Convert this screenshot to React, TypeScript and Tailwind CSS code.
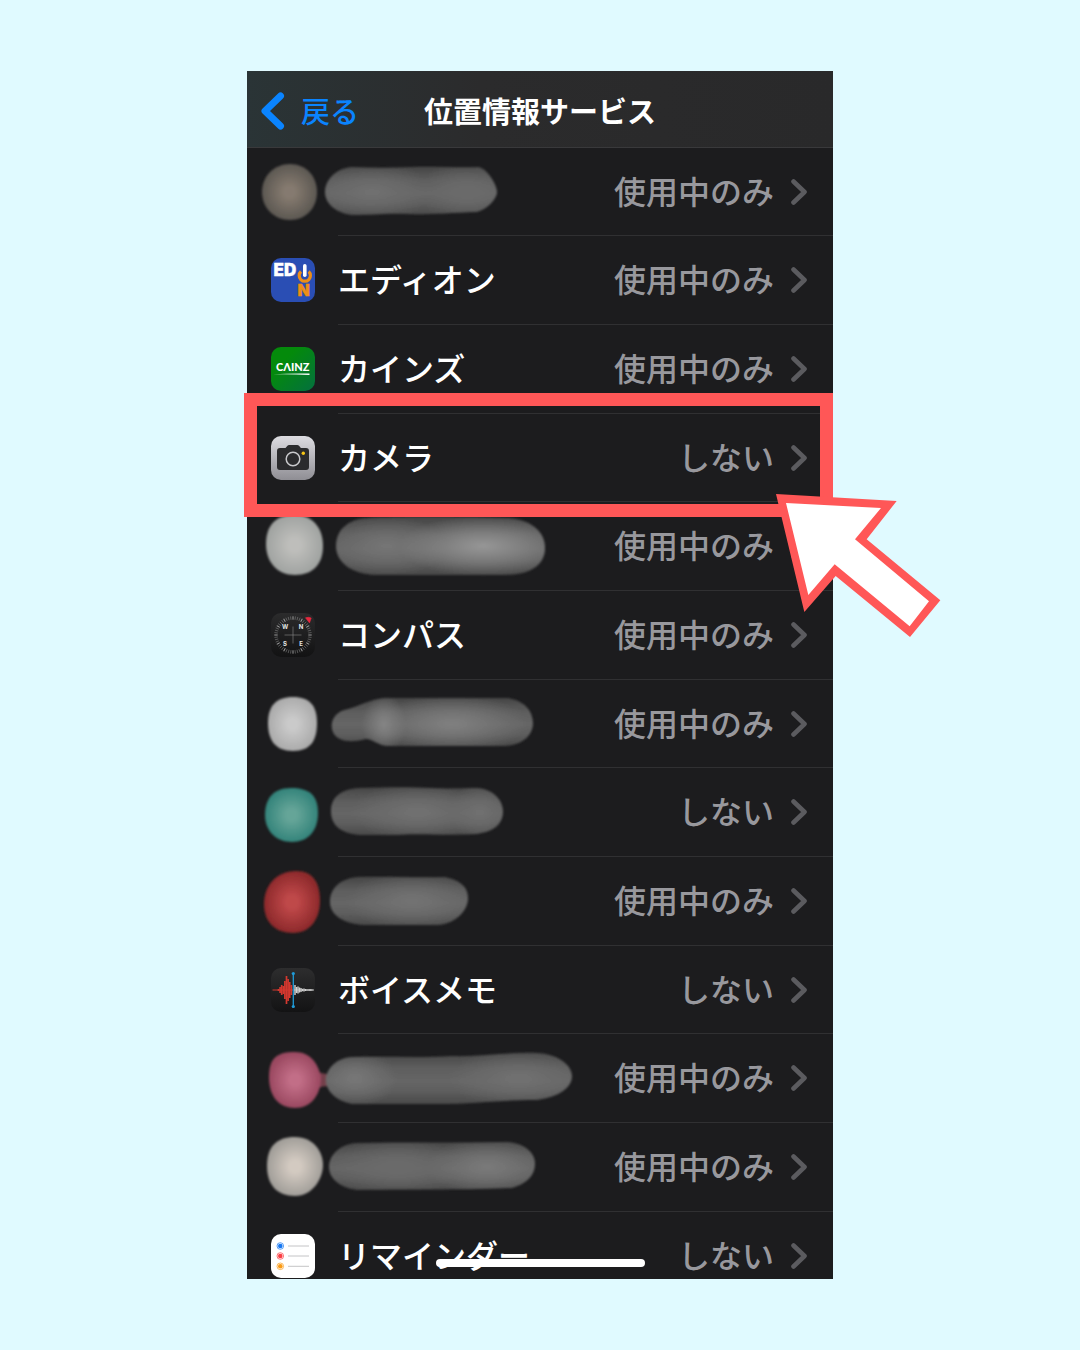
import React from "react";

type Smudge = {
  id: string;
  // round smudge over the app icon
  dot: string;
  dotColors: [string, string];
  // long smudge over the app name
  bar: string;
  // soft highlights inside the long smudge: x, radius, colour
  glows: [number, number, string][];
  bridge?: string;
};

type Row = {
  label?: string;
  icon?: React.ReactNode;
  smudge?: Smudge;
  value: string;
};

const WHILE_USING = "使用中のみ";
const NEVER = "しない";

function EdionIcon() {
  return (
    <svg viewBox="0 0 44 44" className="size-11 shrink-0" aria-hidden="true">
      <rect width="44" height="44" rx="10" fill="#2a4eb4" />
      <text
        x="2.500"
        y="18"
        fontFamily="Inter, sans-serif"
        fontSize="17"
        fontWeight="900"
        fill="#fff"
        stroke="#fff"
        strokeWidth="0.3"
      >
        ED
      </text>
      <path d="M30 13.500a5.600 5.600 0 1 0 7.600 0" fill="none" stroke="#ee8e17" strokeWidth="3.200" />
      <path d="M33.800 7.800v9" stroke="#2a4eb4" strokeWidth="5.600" />
      <path d="M33.800 7.800v9.400" stroke="#fff" strokeWidth="3.600" strokeLinecap="round" />
      <text
        x="26.500"
        y="38"
        fontFamily="Inter, sans-serif"
        fontSize="16"
        fontWeight="900"
        fill="#ee8e17"
        stroke="#ee8e17"
        strokeWidth="0.3"
      >
        N
      </text>
    </svg>
  );
}

function CainzIcon() {
  return (
    <svg viewBox="0 0 44 44" className="size-11 shrink-0" aria-hidden="true">
      <defs>
        <linearGradient id="cainz" x1="0" y1="0" x2="1" y2="1">
          <stop offset="0.3" stopColor="#048a0b" />
          <stop offset="1" stopColor="#04703f" />
        </linearGradient>
      </defs>
      <rect width="44" height="44" rx="10" fill="url(#cainz)" />
      <text x="5" y="24" fontFamily="Lato, sans-serif" fontSize="11" fontWeight="900" fill="#fff">
        CΛINZ
      </text>
      <path d="M2 27.300q18-1.200 36.500-.8v1.400Q20 26.900 2 27.300z" fill="#fff" />
    </svg>
  );
}

function CameraIcon() {
  return (
    <svg viewBox="0 0 44 44" className="size-11 shrink-0" aria-hidden="true">
      <defs>
        <linearGradient id="camera" x1="0" y1="0" x2="0" y2="1">
          <stop offset="0" stopColor="#dddce1" />
          <stop offset="1" stopColor="#8f8e94" />
        </linearGradient>
      </defs>
      <rect width="44" height="44" rx="10" fill="url(#camera)" />
      <path
        d="M9 12h5.500l1.700-2q.8-1 2-1h8q1.200 0 2 1l1.700 2H35q3 0 3 3v16q0 3-3 3H9q-3 0-3-3V15q0-3 3-3z"
        fill="#2b2b2d"
      />
      <circle cx="22" cy="23" r="6.800" fill="#2b2b2d" stroke="#c9c9cc" strokeWidth="1.500" />
      <circle cx="32.300" cy="17.200" r="1.700" fill="#f7c514" />
    </svg>
  );
}

function CompassIcon() {
  const ticks = Array.from({ length: 48 }, (_, i) => i * 7.5);
  return (
    <svg viewBox="0 0 44 44" className="size-11 shrink-0" aria-hidden="true">
      <defs>
        <linearGradient id="compass" x1="0" y1="0" x2="0" y2="1">
          <stop offset="0" stopColor="#2b2b2c" />
          <stop offset="1" stopColor="#121213" />
        </linearGradient>
      </defs>
      <rect width="44" height="44" rx="10" fill="url(#compass)" />
      {ticks.map((angle) => (
        <path
          key={angle}
          d="M22 3.300v3.400"
          stroke="#a8a8a8"
          strokeWidth={angle % 30 === 0 ? 0.9 : 0.4}
          transform={`rotate(${angle} 22 22)`}
        />
      ))}
      <path d="M22 13.500v17M13.500 22h17" stroke="#8c8c8c" strokeWidth="0.6" />
      <path d="M34.500 4.800q3-1 5.700.2l-1.700 4.900z" fill="#e8283f" stroke="#e8283f" strokeWidth="0.6" />
      <g fontFamily="Inter, sans-serif" fontSize="6" fontWeight="700" fill="#e6e6e6" textAnchor="middle">
        <text x="14" y="16">W</text>
        <text x="30" y="16">N</text>
        <text x="14" y="32.500">S</text>
        <text x="30" y="32.500">E</text>
      </g>
    </svg>
  );
}

function VoiceMemoIcon() {
  const red = [1, 3, 5, 4, 9, 14, 11, 8, 5];
  const white = [5, 3, 3.5, 2.5, 2, 1.2, 1.5, 1, 0.7, 0.6, 0.9, 0.6, 0.5];
  return (
    <svg viewBox="0 0 44 44" className="size-11 shrink-0" aria-hidden="true">
      <defs>
        <linearGradient id="memo" x1="0" y1="0" x2="0" y2="1">
          <stop offset="0" stopColor="#2d2d2e" />
          <stop offset="1" stopColor="#131314" />
        </linearGradient>
      </defs>
      <rect width="44" height="44" rx="10" fill="url(#memo)" />
      <path d="M1.500 22H22" stroke="#d3382f" strokeWidth="1" />
      <path d="M23 22h19.500" stroke="#c9c9c9" strokeWidth="0.8" />
      {red.map((h, i) => (
        <path key={i} d={`M${7.5 + i * 1.6} ${22 - h}v${h * 2}`} stroke="#d3382f" strokeWidth="1.700" />
      ))}
      {white.map((h, i) => (
        <path key={i} d={`M${24 + i * 1.5} ${22 - h}v${h * 2}`} stroke="#d2d2d2" strokeWidth="1.400" />
      ))}
      <path d="M22.300 5.500v33" stroke="#1f9bd8" strokeWidth="1.300" />
      <circle cx="22.300" cy="5.500" r="1.600" fill="#1f9bd8" />
      <circle cx="22.300" cy="38.500" r="1.600" fill="#1f9bd8" />
    </svg>
  );
}

function RemindersIcon() {
  const items = [
    { y: 12, color: "#1677f2" },
    { y: 22, color: "#fb3e42" },
    { y: 32.3, color: "#fb9b15" },
  ];
  return (
    <svg viewBox="0 0 44 44" className="size-11 shrink-0" aria-hidden="true">
      <rect width="44" height="44" rx="10" fill="#fff" />
      {items.map(({ y, color }) => (
        <g key={color}>
          <circle cx="9.300" cy={y} r="2.300" fill={color} />
          <circle cx="9.300" cy={y} r="3.300" fill="none" stroke={color} strokeWidth="0.7" />
          <path d={`M17 ${y}h21`} stroke="#bdbdc0" strokeWidth="0.9" />
        </g>
      ))}
    </svg>
  );
}

function SmudgeArt({ smudge }: { smudge: Smudge }) {
  const { id, dot, dotColors, bar, glows, bridge } = smudge;
  return (
    <svg viewBox="0 0 338 88" className="h-[88px] w-[338px] shrink-0" aria-hidden="true">
      <defs>
        <radialGradient id={`${id}-dot`}>
          <stop offset="0.2" stopColor={dotColors[0]} />
          <stop offset="1" stopColor={dotColors[1]} />
        </radialGradient>
        <linearGradient id={`${id}-bar`} x1="0" y1="0" x2="0" y2="1">
          <stop offset="0" stopColor="#464646" />
          <stop offset="0.3" stopColor="#5e5e5e" />
          <stop offset="0.55" stopColor="#666666" />
          <stop offset="0.75" stopColor="#5e5e5e" />
          <stop offset="1" stopColor="#494949" />
        </linearGradient>
        {glows.map(([x, , color]) => (
          <radialGradient key={x} id={`${id}-glow-${x}`}>
            <stop offset="0" stopColor={color} />
            <stop offset="0.5" stopColor={color} stopOpacity="0.5" />
            <stop offset="1" stopColor={color} stopOpacity="0" />
          </radialGradient>
        ))}
        <clipPath id={`${id}-clip`}>
          <path d={bar} />
        </clipPath>
        <filter id={`${id}-soft`}>
          <feGaussianBlur stdDeviation="1.1" />
        </filter>
      </defs>
      <g filter={`url(#${id}-soft)`}>
        {bridge && <path d={bridge} fill="#74404c" />}
        <path d={dot} fill={`url(#${id}-dot)`} />
        <path d={bar} fill={`url(#${id}-bar)`} />
        <g clipPath={`url(#${id}-clip)`}>
          {glows.map(([x, r]) => (
            <ellipse key={x} cx={x} cy="44" rx={r} ry="30" fill={`url(#${id}-glow-${x})`} />
          ))}
        </g>
      </g>
    </svg>
  );
}

const rows: Row[] = [
  {
    value: WHILE_USING,
    smudge: {
      id: "s1",
      dot: "M43 16C59 16 70 28 70 44S59 72 43 72 15 60 15 44 27 16 43 16z",
      dotColors: ["#857a6f", "#5c5852"],
      bar: "M105 19C125 20 145 20 165 19S210 20 231 19C240 20 250 37 250 44C250 50 241 61 230 64C200 65 180 67 160 66S125 67 105 67C88 65 78 55 78 44S88 20 105 19z",
      glows: [[125, 60, "#707070"], [220, 50, "#6c6c6c"]],
    },
  },
  { label: "エディオン", icon: <EdionIcon />, value: WHILE_USING },
  { label: "カインズ", icon: <CainzIcon />, value: WHILE_USING },
  { label: "カメラ", icon: <CameraIcon />, value: NEVER },
  {
    value: WHILE_USING,
    smudge: {
      id: "s2",
      dot: "M47 13C66 13 76 26 76 44S66 73 48 73 19 60 19 42 28 13 47 13z",
      dotColors: ["#bebebb", "#a0a3a1"],
      bar: "M120 16C160 14 220 15 262 16C286 18 298 31 298 46S286 73 258 73H128C104 72 89 60 89 44S101 17 120 16z",
      glows: [[140, 60, "#757575"], [236, 85, "#969696"]],
    },
  },
  { label: "コンパス", icon: <CompassIcon />, value: WHILE_USING },
  {
    value: WHILE_USING,
    smudge: {
      id: "s3",
      dot: "M46 17C63 17 70 26 70 43S64 71 46 71 21 60 21 43 29 17 46 17z",
      dotColors: ["#cacaca", "#ababab"],
      bar: "M101 29C112 26 124 19 137 18H260C277 20 286 31 286 43S276 65 258 66H140C130 65 126 59 119 59C108 62 99 62 93 59C80 53 82 32 101 29z",
      glows: [[137, 22, "#858585"], [205, 75, "#808080"]],
    },
  },
  {
    value: NEVER,
    smudge: {
      id: "s4",
      dot: "M44 20C62 20 71 27 71 45S61 74 45 74 18 63 18 47 26 20 44 20z",
      dotColors: ["#65a598", "#34847b"],
      bar: "M112 20C140 19 165 19 185 20S215 20 230 20C246 21 256 32 256 43S250 63 230 66C200 68 170 65 150 67H112C93 65 84 57 84 43S94 21 112 20z",
      glows: [[170, 65, "#717171"], [233, 30, "#707070"]],
    },
  },
  {
    value: WHILE_USING,
    smudge: {
      id: "s5",
      dot: "M49 14C67 14 73 27 73 44S64 76 46 76 17 65 17 47 29 14 49 14z",
      dotColors: ["#bf4849", "#8d292b"],
      bar: "M110 20C140 19 170 21 198 20C212 23 221 29 221 41S210 66 192 68H115C96 66 83 58 83 45S92 22 110 20z",
      glows: [[165, 65, "#737373"]],
    },
  },
  { label: "ボイスメモ", icon: <VoiceMemoIcon />, value: NEVER },
  {
    value: WHILE_USING,
    smudge: {
      id: "s6",
      dot: "M48 18C63 18 71 29 74 43C74 61 64 74 48 74S22 63 22 43 31 18 48 18z",
      dotColors: ["#c26e87", "#9a4860"],
      bar: "M105 23C140 22 170 24 205 22C230 23 260 18 290 19C311 20 325 31 325 42S313 63 290 66C250 66 230 70 190 70H105C89 67 79 57 79 46S89 24 105 23z",
      glows: [[108, 42, "#777777"], [272, 70, "#717171"]],
      bridge: "M68 35Q76 43 90 38V56Q77 48 68 57z",
    },
  },
  {
    value: WHILE_USING,
    smudge: {
      id: "s7",
      dot: "M48 14C67 14 76 29 76 42S66 73 48 73 20 62 20 43 29 14 48 14z",
      dotColors: ["#d3cac1", "#a19e99"],
      bar: "M110 20C160 19 210 20 260 19C278 20 288 30 288 40C288 54 278 61 265 65C220 67 180 66 110 67C94 65 82 56 82 44S93 21 110 20z",
      glows: [[150, 65, "#6c6c6c"], [240, 60, "#7a7a7a"]],
    },
  },
  { label: "リマインダー", icon: <RemindersIcon />, value: NEVER },
];

function SettingsRow({ label, icon, smudge, value }: Row) {
  return (
    <li className="flex flex-col">
      <button type="button" className="flex min-h-0 flex-1 items-center pr-[26px] text-left">
        {smudge ? (
          <SmudgeArt smudge={smudge} />
        ) : (
          <span className="flex items-center gap-[23px] pl-6">
            {icon}
            <span className="pb-1 font-medium whitespace-nowrap text-white">{label}</span>
          </span>
        )}
        <span className="ml-auto pb-1 font-medium whitespace-nowrap text-[#98989d]">{value}</span>
        <svg viewBox="0 0 16 26" className="ml-[17px] h-[26px] w-4 shrink-0" aria-hidden="true">
          <path
            d="M2.500 2.500 13.500 13l-11 10.500"
            fill="none"
            stroke="#5b5b5f"
            strokeWidth="4.600"
            strokeLinecap="round"
            strokeLinejoin="round"
          />
        </svg>
      </button>
      <hr className="ml-[91px] border-[#303032]" />
    </li>
  );
}

export default function App() {
  return (
    <main className="flex min-h-screen items-center justify-center bg-[#e0faff] font-['Noto_Sans_CJK_JP','Noto_Sans',sans-serif]">
      <div className="relative w-full max-w-[586px]">
        {/* PHONE SCREEN */}
        <div className="relative overflow-hidden bg-[#1c1c1e]">
          <header className="grid h-[77px] grid-cols-[1fr_auto_1fr] items-center border-b border-[#39393b] bg-linear-to-r from-[#2a3436] via-[#2b2b2c] via-40% to-[#29292a] px-3.5 pt-1 text-[29px] leading-10">
            <button type="button" className="flex items-center gap-4 justify-self-start font-medium text-[#0a84ff]">
              <svg viewBox="0 0 24 38" className="h-[38px] w-6" aria-hidden="true">
                <path
                  d="M19.500 4 4 19l15.500 15"
                  fill="none"
                  stroke="currentColor"
                  strokeWidth="7"
                  strokeLinecap="round"
                  strokeLinejoin="round"
                />
              </svg>
              <span className="pb-0.5">戻る</span>
            </button>
            <h1 className="pb-0.5 font-bold whitespace-nowrap text-white">位置情報サービス</h1>
          </header>

          {/* the last row runs off the bottom edge */}
          <ul className="-mb-[21px] grid auto-rows-[88px_89px_89px] text-[32px] leading-10">
            {rows.map((row, i) => (
              <SettingsRow key={i} {...row} />
            ))}
          </ul>

          {/* HOME INDICATOR */}
          <div className="absolute inset-x-0 bottom-3 mx-auto h-2 w-[209px] rounded-full bg-white" />
        </div>

        {/* HIGHLIGHT + POINTER */}
        <div className="pointer-events-none absolute top-[322px] right-0 -left-[3px] h-[124px] border-[13px] border-[#ff5757]" />
        <svg
          viewBox="0 0 495 429"
          className="pointer-events-none absolute top-[423px] -right-[108px] h-[143px] w-[165px]"
          aria-hidden="true"
        >
          <path d="M0 0 362 21 272 136 493 319 402 429 179 246 85 354z" fill="#ff5757" />
          <path d="M30 27 315 42 237 136 459 322 401 397 176 211 97 303z" fill="#fff" />
        </svg>
      </div>
    </main>
  );
}
